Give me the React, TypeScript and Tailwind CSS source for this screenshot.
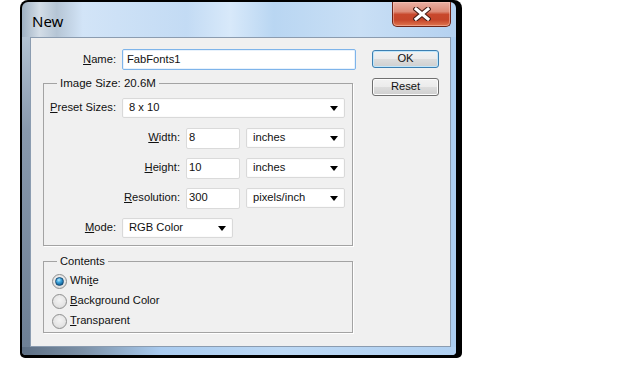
import React from "react";

const Arrow = () => (
  <svg width="8" height="5" viewBox="0 0 8 5" className="shrink-0">
    <path d="M0 0 H8 L4 5 Z" fill="#000" />
  </svg>
);

function Select({ w, value }: { w: string; value: string }) {
  return (
    <div
      className={`${w} h-[20px] bg-white border border-[#d9d9d9] rounded-[2px] flex items-center justify-between pl-[6px] pr-[6px] shadow-[inset_0_0_0_1px_#fbfbfb]`}
    >
      <span>{value}</span>
      <Arrow />
    </div>
  );
}

function TextBox({ w, value }: { w: string; value: string }) {
  return (
    <div className={`${w} h-[21px] bg-white border border-[#dadada] rounded-[2px] flex items-center pl-[2px]`}>
      {value}
    </div>
  );
}

function Radio({ checked }: { checked?: boolean }) {
  return (
    <div className="w-[15px] h-[15px] rounded-full border border-[#8e8f8f] bg-[radial-gradient(circle_at_50%_40%,#f4f4f4_0%,#e4e4e4_60%,#cfcfcf_100%)] flex items-center justify-center shrink-0">
      {checked && (
        <div className="w-[9px] h-[9px] rounded-full border border-[#1b4f77] bg-[radial-gradient(circle_at_40%_30%,#b9ecff_0%,#3fa6de_35%,#0d5c93_80%,#0a3f6a_100%)]" />
      )}
    </div>
  );
}

function CloseButton() {
  return (
    <div className="w-[59px] h-[25px] rounded-b-[5px] border border-t-0 border-[#6d2417] bg-[linear-gradient(180deg,#eab0a3_0%,#dd8b77_40%,#c8482c_52%,#c6462a_75%,#e0764f_100%)] shadow-[inset_0_0_0_1px_rgba(255,210,200,0.45)] flex items-center justify-center">
      <svg width="18" height="14" viewBox="0 0 18 14">
        <path d="M3 2 L15 12 M15 2 L3 12" stroke="#4a2018" strokeWidth="5.2" strokeLinecap="square" />
        <path d="M3 2 L15 12 M15 2 L3 12" stroke="#ffffff" strokeWidth="3" strokeLinecap="square" />
      </svg>
    </div>
  );
}

function Button({ children, def }: { children: React.ReactNode; def?: boolean }) {
  return (
    <div
      className={`h-[18px] w-[67px] rounded-[3px] border flex items-center justify-center ${
        def
          ? "border-[#3c7fb1] shadow-[inset_0_0_0_1px_#bfe6fb]"
          : "border-[#707070] shadow-[inset_0_0_0_1px_#fcfcfc]"
      } bg-[linear-gradient(180deg,#f2f2f2_0%,#ebebeb_50%,#dddddd_51%,#cfcfcf_100%)]`}
    >
      {children}
    </div>
  );
}

export default function App() {
  return (
    <div
      className="w-[620px] h-[366px] bg-white pl-[20px] text-[11.2px] text-[#111] leading-none"
      style={{ fontFamily: '"Liberation Sans", Arial, sans-serif' }}
    >
      <div className="w-[442px] h-[358px] bg-black rounded-t-[8px] rounded-b-[5px] pt-[2px] pl-[2px] pr-[6px] pb-[3px]">
        <div className="h-full rounded-t-[6px] rounded-b-[4px] overflow-hidden flex flex-col bg-[linear-gradient(90deg,#9fb1c3_0%,#d3dde7_4%,#b5c5d5_8%,#d2e4f7_14%,#c3dbf4_38%,#d8e9fa_48%,#b9d6f2_58%,#c9dff5_78%,#b4d1f0_100%)]">
          {/* Title bar */}
          <div className="h-[35px] flex items-start pl-[10px] pr-[5px] shrink-0">
            <div
              className="flex-1 pt-[9px] text-[15px] leading-[20px] text-black"
              style={{ fontFamily: '"Segoe UI", "Noto Sans", "Open Sans", sans-serif' }}
            >
              New
            </div>
            <CloseButton />
          </div>
          {/* Middle */}
          <div className="flex-1 flex">
            <div className="w-[8px] bg-[linear-gradient(180deg,#b3c3d3_0%,#8899ad_30%,#6e8095_100%)]" />
            <div className="w-[421px] bg-[#f0f0f0] border border-[#8b9cb0] flex pl-[12px] pt-[11px]">
              {/* Left column */}
              <div className="w-[313px] flex flex-col">
                <div className="flex items-center h-[21px]">
                  <div className="w-[73px] text-right">
                    <u>N</u>ame:
                  </div>
                  <div className="ml-[6px] w-[234px] h-[21px] bg-white border border-[#7eb4ea] rounded-[2px] flex items-center pl-[4px] shadow-[inset_0_0_0_1px_#e8f2fc]">
                    FabFonts1
                  </div>
                </div>

                <fieldset className="mt-[6px] w-[310px] border border-[#a3a3a3] shadow-[1px_1px_0_#ffffff] pt-[8px] pb-[7px]">
                  <legend className="ml-[13px] px-[3px] leading-[14px] text-[11.5px]">Image Size: 20.6M</legend>
                  <div className="flex flex-col gap-[10px]">
                    <div className="flex items-center h-[20px]">
                      <div className="w-[72px] text-right">
                        <u>P</u>reset Sizes:
                      </div>
                      <div className="ml-[6px]">
                        <Select w="w-[223px]" value="8 x 10" />
                      </div>
                    </div>
                    <div className="flex items-center h-[20px]">
                      <div className="w-[136px] text-right">
                        <u>W</u>idth:
                      </div>
                      <div className="ml-[6px]">
                        <TextBox w="w-[54px]" value="8" />
                      </div>
                      <div className="ml-[6px]">
                        <Select w="w-[99px]" value="inches" />
                      </div>
                    </div>
                    <div className="flex items-center h-[20px]">
                      <div className="w-[136px] text-right">
                        <u>H</u>eight:
                      </div>
                      <div className="ml-[6px]">
                        <TextBox w="w-[54px]" value="10" />
                      </div>
                      <div className="ml-[6px]">
                        <Select w="w-[99px]" value="inches" />
                      </div>
                    </div>
                    <div className="flex items-center h-[20px]">
                      <div className="w-[136px] text-right">
                        <u>R</u>esolution:
                      </div>
                      <div className="ml-[6px]">
                        <TextBox w="w-[54px]" value="300" />
                      </div>
                      <div className="ml-[6px]">
                        <Select w="w-[99px]" value="pixels/inch" />
                      </div>
                    </div>
                    <div className="flex items-center h-[20px]">
                      <div className="w-[72px] text-right">
                        <u>M</u>ode:
                      </div>
                      <div className="ml-[6px]">
                        <Select w="w-[111px]" value="RGB Color" />
                      </div>
                    </div>
                  </div>
                </fieldset>

                <fieldset className="mt-[8px] w-[310px] border border-[#a3a3a3] shadow-[1px_1px_0_#ffffff] pt-[3px] pb-[1px] pl-[8px]">
                  <legend className="ml-[5px] px-[3px] leading-[14px]">Contents</legend>
                  <div className="flex flex-col">
                    <div className="flex items-center h-[20px] gap-[3px]">
                      <Radio checked />
                      <span>
                        Whi<u>t</u>e
                      </span>
                    </div>
                    <div className="flex items-center h-[20px] gap-[3px]">
                      <Radio />
                      <span>
                        <u>B</u>ackground Color
                      </span>
                    </div>
                    <div className="flex items-center h-[20px] gap-[3px]">
                      <Radio />
                      <span>
                        <u>T</u>ransparent
                      </span>
                    </div>
                  </div>
                </fieldset>
              </div>

              {/* Right column */}
              <div className="ml-[16px] pt-[1px] flex flex-col gap-[10px]">
                <Button def>OK</Button>
                <Button>Reset</Button>
              </div>
            </div>
            <div className="w-[5px] bg-[#abcdf0]" />
          </div>
          <div className="h-[8px] shrink-0 bg-[linear-gradient(90deg,#5d6f84_0%,#7c91a7_14%,#a9cbef_32%,#bcd8f4_60%,#b0d0f1_100%)]" />
        </div>
      </div>
    </div>
  );
}
